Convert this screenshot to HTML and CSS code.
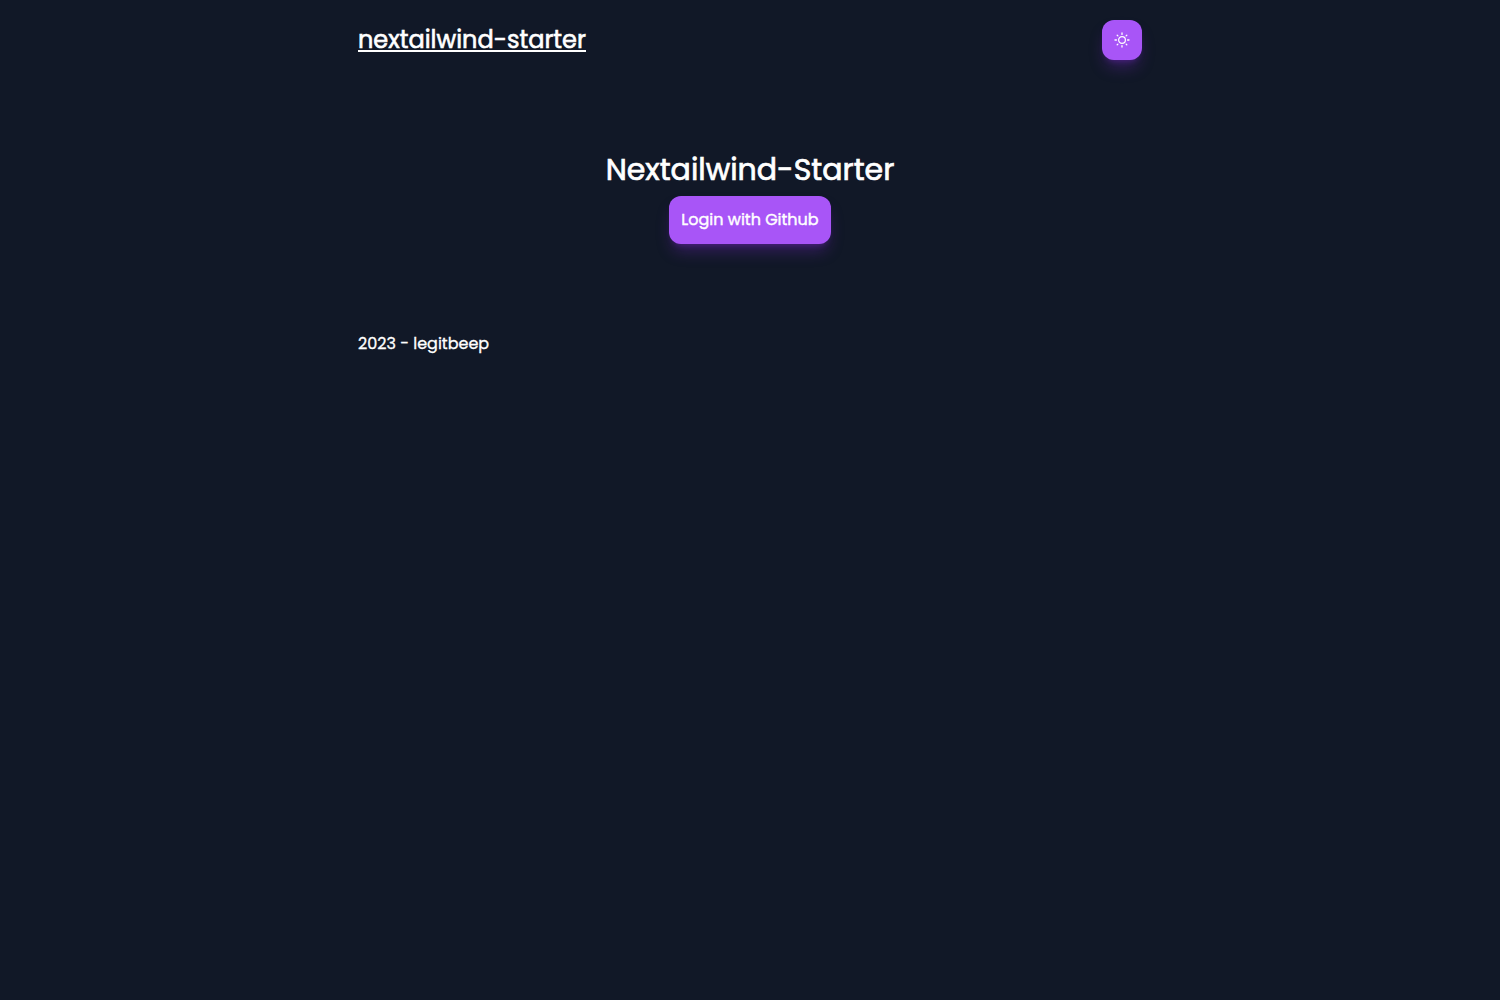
FILE: index.html
```html
<!DOCTYPE html>
<html lang="en">
<head>
<meta charset="utf-8">
<title>nextailwind-starter</title>
<link rel="stylesheet" href="styles.css">
</head>
<body>
<div class="container">
  <header class="header">
    <a class="brand" href="#">nextailwind-starter</a>
    <button class="button theme-toggle" type="button" aria-label="Toggle theme">
      <svg class="icon" viewBox="0 0 16 16" fill="none" stroke="currentColor" stroke-linecap="round">
        <circle cx="8" cy="8" r="3.4" stroke-width="1.2"/>
        <path d="M8 1v1.4M8 13.6V15M1 8h1.4M13.6 8H15M3.2 3.2l.7.7M12.1 12.1l.7.7M3.2 12.8l.7-.7M12.1 3.9l.7-.7" stroke-width="1.3"/>
      </svg>
    </button>
  </header>
  <main class="main">
    <h1 class="title">Nextailwind-Starter</h1>
    <button class="button login" type="button">Login with Github</button>
  </main>
  <footer class="footer">2023 - legitbeep</footer>
</div>
</body>
</html>
```

FILE: styles.css
```css
* {
  box-sizing: border-box;
}

body {
  margin: 0;
  min-height: 100vh;
  background: #111827;
  color: #fff;
  font-family: Poppins, Inter, sans-serif;
  font-size: 16px;
  font-weight: 400;
  line-height: 24px;
}

.container {
  width: 784px;
  margin: 0 auto;
}

.header {
  display: flex;
  align-items: center;
  justify-content: space-between;
  height: 80px;
}

.brand {
  margin-bottom: 6px;
  padding-top: 8px;
  border-bottom: 2px solid #fff;
  color: inherit;
  font-size: 24px;
  line-height: 20px;
  text-decoration: none;
  white-space: nowrap;
  -webkit-text-stroke: 0.6px #fff;
}

.button {
  border: 0;
  border-radius: 12px;
  background: #a855f7;
  color: #fff;
  font: inherit;
  box-shadow: 0 10px 15px -3px rgb(120 40 200 / 35%), 0 4px 6px -4px rgb(120 40 200 / 50%);
}

.theme-toggle {
  display: grid;
  place-items: center;
  width: 40px;
  height: 40px;
  padding: 0;
}

.icon {
  width: 16px;
  height: 16px;
}

.main {
  display: flex;
  flex-direction: column;
  align-items: center;
  padding: 70px 0 88px;
}

.title {
  margin: 0 0 6px;
  font-size: 30px;
  font-weight: 400;
  line-height: 40px;
  white-space: nowrap;
  -webkit-text-stroke: 0.7px #fff;
}

.login {
  width: 162px;
  height: 48px;
  padding: 0;
  white-space: nowrap;
  -webkit-text-stroke: 0.4px #fff;
}

.footer {
  line-height: 24px;
  -webkit-text-stroke: 0.3px #fff;
}
```
